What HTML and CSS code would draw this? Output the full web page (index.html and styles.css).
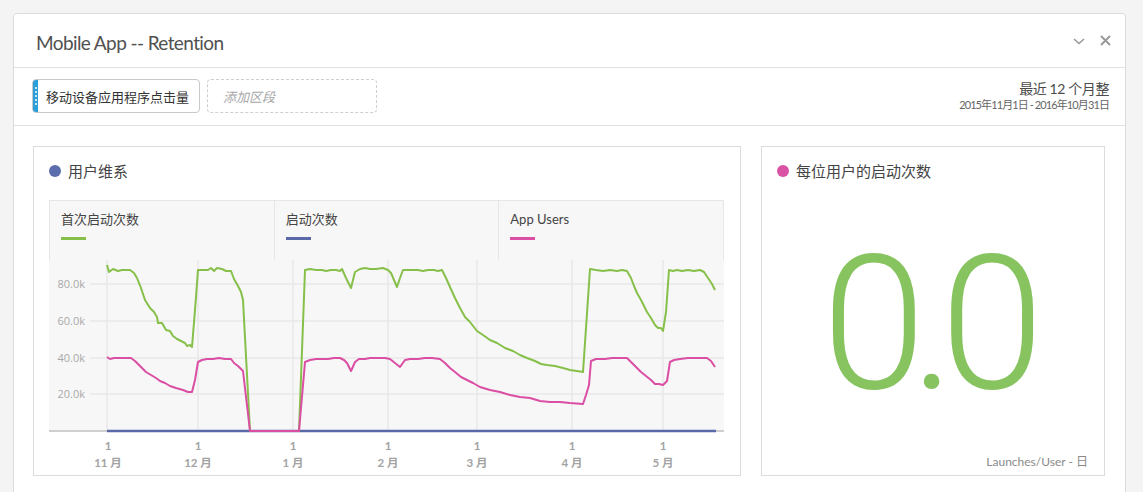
FILE: index.html
```html
<!DOCTYPE html>
<html lang="zh">
<head>
<meta charset="utf-8">
<title>Mobile App -- Retention</title>
<link rel="stylesheet" href="styles.css">
</head>
<body>
<div class="panel">
  <div class="panel-header">
    <h1 class="title">Mobile App -- Retention</h1>
    <div class="header-actions">
      <svg class="icon-chevron" width="12" height="7" viewBox="0 0 12 7"><polyline points="1,1 6,5.5 11,1" fill="none" stroke="#9a9a9a" stroke-width="1.6"/></svg>
      <svg class="icon-close" width="11" height="11" viewBox="0 0 11 11"><path d="M1,1 L10,10 M10,1 L1,10" stroke="#9a9a9a" stroke-width="2" fill="none"/></svg>
    </div>
  </div>
  <div class="toolbar">
    <div class="segments">
      <div class="segment">
        <span class="grip"><i></i><i></i><i></i><i></i><i></i></span>
        <span class="seg-label">移动设备应用程序点击量</span>
      </div>
      <div class="segment-drop">添加区段</div>
    </div>
    <div class="daterange">
      <div class="range-name">最近 12 个月整</div>
      <div class="range-dates">2015年11月1日 - 2016年10月31日</div>
    </div>
  </div>
  <div class="content">
    <div class="card card-chart">
      <div class="card-title"><span class="dot dot-blue"></span>用户维系</div>
      <div class="chart">
        <div class="legend">
          <div class="legend-item"><div class="legend-label">首次启动次数</div><div class="swatch swatch-green"></div></div>
          <div class="legend-item"><div class="legend-label">启动次数</div><div class="swatch swatch-blue"></div></div>
          <div class="legend-item"><div class="legend-label">App Users</div><div class="swatch swatch-pink"></div></div>
        </div>
        <svg class="plot" width="675" height="210" viewBox="49 260 675 210">
          <rect x="49" y="260" width="675" height="171" fill="#f7f7f7"/>
          <g stroke="#e8e8e8" stroke-width="1.5">
            <line x1="90" y1="284" x2="724" y2="284"/>
            <line x1="90" y1="321" x2="724" y2="321"/>
            <line x1="90" y1="358" x2="724" y2="358"/>
            <line x1="90" y1="394" x2="724" y2="394"/>
            <line x1="107" y1="260" x2="107" y2="431"/>
            <line x1="198" y1="260" x2="198" y2="431"/>
            <line x1="293" y1="260" x2="293" y2="431"/>
            <line x1="388" y1="260" x2="388" y2="431"/>
            <line x1="477" y1="260" x2="477" y2="431"/>
            <line x1="572" y1="260" x2="572" y2="431"/>
            <line x1="663" y1="260" x2="663" y2="431"/>
          </g>
          <g class="ylabels" text-anchor="end">
            <text x="85" y="288">80.0k</text>
            <text x="85" y="325">60.0k</text>
            <text x="85" y="362">40.0k</text>
            <text x="85" y="398">20.0k</text>
          </g>
          <line x1="49" y1="431" x2="724" y2="431" stroke="#cfcfcf" stroke-width="2"/>
          <line x1="107" y1="431" x2="716" y2="431" stroke="#5a6aa8" stroke-width="2.5"/>
          <path fill="none" stroke="#86c04a" stroke-width="2" stroke-linejoin="round" d="M107,265 L109,272 L113,269 L118,271 L122,270 L126,270 L130,270 L134,273 L137,278 L141,288 L145,300 L150,308 L154,312 L157,317 L158,323 L162,323 L166,330 L170,331 L173,336 L177,339 L181,341 L185,343 L187,346 L190,345 L192,347 L195,310 L198,270 L203,270 L208,270 L211,268 L214,271 L217,268 L222,269 L226,271 L231,271 L234,279 L238,286 L241,292 L243,300 L250,431 L299,431 L305,270 L310,269 L316,270 L322,270 L326,271 L331,270 L336,270 L340,271 L342,269 L346,278 L351,288 L355,272 L360,269 L365,268 L370,269 L376,269 L383,268 L388,270 L391,273 L394,280 L397,287 L400,278 L403,270 L410,270 L418,270 L423,271 L428,270 L434,270 L438,271 L442,270 L446,278 L450,287 L455,298 L460,308 L465,317 L470,322 L477,331 L483,335 L490,340 L497,343 L505,348 L513,351 L520,355 L527,358 L535,361 L541,364 L547,365 L555,366 L563,368 L570,370 L577,371 L583,372 L590,269 L596,270 L603,271 L610,270 L617,271 L622,270 L627,271 L631,278 L634,286 L637,293 L641,300 L644,306 L647,312 L651,318 L655,325 L658,328 L661,328 L663,331 L666,312 L669,270 L673,271 L677,270 L682,271 L688,270 L694,271 L700,270 L704,272 L708,278 L712,284 L715,290"/>
          <path fill="none" stroke="#da4ea4" stroke-width="2" stroke-linejoin="round" d="M107,357 L110,359 L114,358 L120,358 L126,358 L131,358 L135,361 L138,364 L142,368 L146,372 L151,375 L156,378 L160,381 L165,383 L170,386 L176,388 L183,390 L188,392 L192,392 L195,380 L198,362 L202,360 L207,359 L213,359 L219,358 L225,359 L231,359 L234,363 L238,366 L243,371 L250,431 L299,431 L305,362 L310,360 L316,359 L322,359 L328,359 L334,358 L340,358 L344,360 L347,363 L351,371 L355,362 L359,359 L365,359 L370,358 L378,358 L385,358 L390,359 L395,363 L400,367 L405,360 L410,359 L418,359 L425,358 L432,358 L440,359 L445,363 L450,368 L455,372 L461,377 L467,380 L473,383 L480,387 L490,390 L500,392 L510,395 L520,397 L530,398 L540,401 L550,402 L560,402 L570,403 L583,404 L586,395 L589,385 L591,361 L596,359 L605,359 L612,358 L620,358 L627,358 L631,362 L636,367 L641,372 L646,376 L651,380 L655,384 L659,384 L663,385 L667,381 L670,362 L674,360 L680,359 L688,358 L695,358 L702,358 L707,358 L711,361 L715,367"/>
          <g class="xlabels" text-anchor="middle">
            <text x="108" y="450">1</text><text x="108" y="467">11 月</text>
            <text x="198" y="450">1</text><text x="198" y="467">12 月</text>
            <text x="293" y="450">1</text><text x="293" y="467">1 月</text>
            <text x="388" y="450">1</text><text x="388" y="467">2 月</text>
            <text x="477" y="450">1</text><text x="477" y="467">3 月</text>
            <text x="572" y="450">1</text><text x="572" y="467">4 月</text>
            <text x="663" y="450">1</text><text x="663" y="467">5 月</text>
          </g>
        </svg>
      </div>
    </div>
    <div class="card card-summary">
      <div class="card-title"><span class="dot dot-pink"></span>每位用户的启动次数</div>
      <div class="big-number">0.0</div>
      <div class="summary-foot">Launches/User - 日</div>
    </div>
  </div>
</div>
</body>
</html>
```
FILE: styles.css
```css
* { box-sizing: border-box; }
html, body { margin: 0; padding: 0; }
body {
  background: #f4f4f4;
  font-family: "Lato", "Noto Sans CJK SC", sans-serif;
  color: #4b4b4b;
  overflow: hidden;
}
.panel {
  margin: 13px 0 0 13px;
  width: 1113px;
  height: 520px;
  background: #fff;
  border: 1px solid #dcdcdc;
  border-radius: 4px;
}
.panel-header {
  height: 54px;
  border-bottom: 1px solid #e1e1e1;
  display: flex;
  align-items: center;
  padding: 0 14px 0 22px;
}
.title {
  margin: 0;
  padding-top: 4px;
  font-size: 19px;
  font-weight: 400;
  line-height: 24px;
  letter-spacing: -0.6px;
  color: #505050;
}
.header-actions {
  margin-left: auto;
  display: flex;
  align-items: center;
  gap: 15px;
}
.icon-chevron { display: block; margin-top: 1px; }
.icon-close { display: block; }
.toolbar {
  height: 58px;
  border-bottom: 1px solid #e1e1e1;
  display: flex;
  justify-content: space-between;
  padding: 11px 16px 0 18px;
}
.segments { display: flex; gap: 7px; align-items: flex-start; }
.segment {
  width: 168px;
  height: 34px;
  border: 1px solid #c9c9c9;
  border-radius: 4px;
  display: flex;
  align-items: center;
  overflow: hidden;
  background: #fff;
}
.grip {
  width: 5px;
  height: 100%;
  background: #2c9ed8;
  display: flex;
  flex-direction: column;
  align-items: center;
  justify-content: center;
  gap: 2px;
}
.grip i {
  display: block;
  width: 2px;
  height: 2px;
  background: #fff;
  border-radius: 1px;
}
.seg-label {
  padding-left: 8px;
  font-size: 13px;
  color: #333;
  white-space: nowrap;
}
.segment-drop {
  width: 170px;
  height: 34px;
  border: 1px dashed #cfcfcf;
  border-radius: 4px;
  padding-left: 15px;
  display: flex;
  align-items: center;
  font-size: 13px;
  font-style: italic;
  color: #a8a8a8;
}
.daterange { text-align: right; padding-top: 1px; }
.range-name { font-size: 14px; line-height: 18px; color: #4b4b4b; letter-spacing: -0.4px; }
.range-dates { font-size: 11px; line-height: 14px; color: #666; letter-spacing: -0.9px; }
.content {
  display: flex;
  gap: 20px;
  padding: 20px 20px 0 19px;
}
.card {
  height: 330px;
  border: 1px solid #dcdcdc;
  background: #fff;
}
.card-chart { width: 708px; }
.card-summary {
  width: 344px;
  display: flex;
  flex-direction: column;
}
.card-title {
  height: 53px;
  padding: 14px 0 19px 15px;
  font-size: 15px;
  line-height: 20px;
  color: #444;
  display: flex;
  align-items: center;
  align-self: flex-start;
}
.dot {
  width: 12px;
  height: 12px;
  border-radius: 50%;
  margin-right: 7px;
  flex: none;
}
.dot-blue { background: #5b6dac; }
.dot-pink { background: #da52a3; }
.chart { margin-left: 15px; width: 675px; }
.legend {
  height: 60px;
  display: flex;
  background: #f7f7f7;
  border: 1px solid #e6e6e6;
  border-bottom: none;
}
.legend-item {
  flex: 1;
  padding: 9px 11px 0;
}
.legend-item + .legend-item { border-left: 1px solid #e6e6e6; }
.legend-label { font-size: 13px; line-height: 18px; color: #444; }
.swatch { width: 25px; height: 3px; margin-top: 9px; }
.swatch-green { background: #86c04a; }
.swatch-blue { background: #5a6aa8; }
.swatch-pink { background: #da4ea4; }
.plot { display: block; }
.ylabels text {
  font-family: "Open Sans", "Lato", sans-serif;
  font-size: 11px;
  fill: #a9a9a9;
}
.xlabels text {
  font-family: "Lato", "Noto Sans CJK SC", sans-serif;
  font-size: 11.5px;
  font-weight: 700;
  fill: #a3a3a3;
}
.big-number {
  margin-top: 31px;
  font-family: "Roboto", sans-serif;
  font-weight: 300;
  font-size: 187px;
  line-height: 1;
  letter-spacing: -15px;
  text-indent: -15px;
  color: #87c35f;
  text-align: center;
}
.summary-foot {
  margin-top: auto;
  padding: 0 16px 5px 0;
  text-align: right;
  font-size: 12px;
  line-height: 16px;
  color: #8a8a8a;
}
```
